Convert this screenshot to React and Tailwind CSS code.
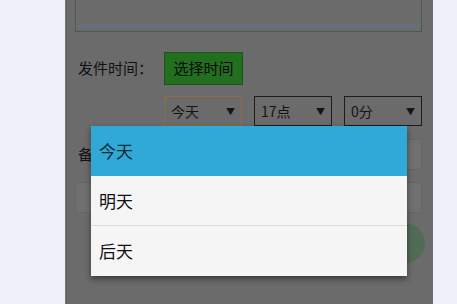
import React from "react";

const font = { fontFamily: '"Noto Sans CJK SC", "Noto Sans", sans-serif' };

const Select = ({ label, active }) => (
  <div
    className={`flex items-center justify-between w-[78px] h-[30px] pl-[6px] pr-[6px] border ${
      active ? "border-[#8c6d45]" : "border-[#1c1c1c]"
    } text-[14px] text-[#141414]`}
  >
    <span>{label}</span>
    <span className="text-[9px] leading-none">▼</span>
  </div>
);

const App = () => {
  const days = ["今天", "明天", "后天"];

  return (
    <div className="w-[457px] h-[304px] bg-[#eef1f7] flex overflow-hidden" style={font}>
      <div className="ml-[65px] w-[368px] h-full bg-[#6b6b6b] relative flex">
        <div className="w-[3px] h-full bg-[#767676] border-r border-[#606060]" />

        <div className="flex-1 flex flex-col pl-[8px] pr-[11px]">
          {/* text area */}
          <div className="h-[32px] border border-t-0 border-[#4f5a4a] flex flex-col justify-end">
            <div className="h-[5px] mb-[2px] bg-[#66707a]" />
          </div>

          {/* send time */}
          <div className="flex items-center mt-[19px] h-[34px]">
            <span className="ml-[3px] text-[15px] text-[#111]">发件时间：</span>
            <button className="ml-[11px] w-[79px] h-[33px] bg-[#22701f] border border-[#1a5519] text-[15px] text-[#0a0a0a]">
              选择时间
            </button>
          </div>

          {/* selects */}
          <div className="flex gap-[12px] mt-[11px] ml-[89px]">
            <Select label="今天" active />
            <Select label="17点" />
            <Select label="0分" />
          </div>

          {/* remark */}
          <div className="flex items-center mt-[13px] h-[31px]">
            <span className="ml-[3px] text-[15px] text-[#111]">备</span>
            <div className="flex-1 h-full ml-[20px] bg-[#707070] border border-[#666]" />
          </div>

          <div className="mt-[12px] h-[31px] bg-[#707070] border border-[#666]" />

          <div className="flex justify-end mt-[10px]">
            <div className="w-[40px] h-[40px] rounded-full bg-[#526b57] -mr-[3px]" />
          </div>
        </div>

        {/* dropdown */}
        <div className="absolute left-[26px] top-[126px] w-[316px] bg-[#f5f5f5] shadow-[0_3px_6px_rgba(0,0,0,0.45)]">
          {days.map((d, i) => (
            <div
              key={d}
              className={`h-[50px] flex items-center pl-[8px] text-[17px] ${
                i === 0 ? "bg-[#31a9d6] text-[#0b2a38]" : "text-[#111]"
              } ${i === 1 ? "border-b border-[#dcdcdc]" : ""}`}
            >
              {d}
            </div>
          ))}
        </div>
      </div>
    </div>
  );
};

export default App;
